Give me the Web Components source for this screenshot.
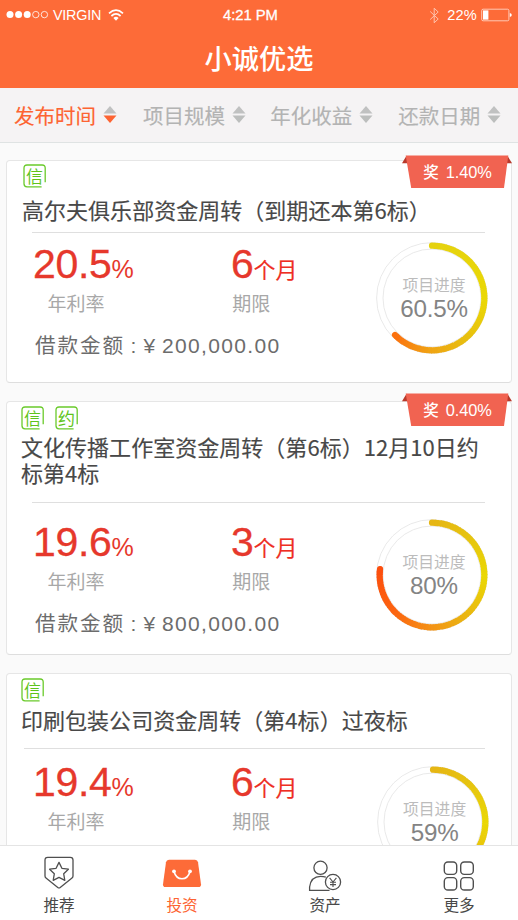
<!DOCTYPE html>
<html lang="zh-CN">
<head>
<meta charset="utf-8">
<title>小诚优选</title>
<style>
body{margin:0;width:518px;height:920px;overflow:hidden;background:#fafafa;font-family:"Liberation Sans","Noto Sans CJK SC",sans-serif;color:#4a4a4a}
</style>
</head>
<body>
<invest-app></invest-app>
<script>
const CJK = '"Noto Sans CJK SC",sans-serif';
const define = (name, html, after) => customElements.define(name, class extends HTMLElement {
  connectedCallback() {
    if (this.shadowRoot) return;
    this.attachShadow({mode: 'open'});
    this.shadowRoot.innerHTML = typeof html === 'function' ? html(this) : html;
    if (after) after(this);
  }
});

define('status-bar', `
<style>
:host{display:grid;grid-template-columns:217px auto 1fr;align-items:center;height:30px;color:#fff;font-size:14.6px;line-height:30px;padding:0 6px;box-sizing:border-box}
div{display:flex;align-items:center;height:30px}
.r{justify-content:flex-end}
svg{display:block;flex:none}
</style>
<div><svg width="43" height="10" viewBox="0 0 43 10"><g fill="#fff"><circle cx="4" cy="4.6" r="3.5"/><circle cx="12.6" cy="4.6" r="3.5"/><circle cx="21.2" cy="4.6" r="3.5"/></g><g fill="none" stroke="#fff" stroke-width=".8"><circle cx="29.8" cy="4.6" r="3.2"/><circle cx="38.4" cy="4.6" r="3.2"/></g></svg><span style="margin-left:4px;font-size:14.4px;letter-spacing:-.25px">VIRGIN</span>
<svg style="margin-left:7px" width="16" height="12" viewBox="0 0 16 12"><g fill="none" stroke="#fff" stroke-width="1.7"><path d="M1 4.4Q8-2 15 4.4"/><path d="M3.4 7Q8 2.8 12.6 7"/></g><path fill="#fff" d="M5.4 8.9Q8 6.8 10.6 8.9L8 11.7Z"/></svg></div>
<div style="font-size:14.8px;letter-spacing:-.05px;-webkit-text-stroke:.3px #fff">4:21 PM</div>
<div class="r"><svg width="11" height="17" viewBox="0 0 11 17"><path d="M1.2 4.5L9.2 12 5.2 15.8V1.2L9.2 5 1.2 12.5" fill="none" stroke="#ffc3ad" stroke-width="1"/></svg><span style="margin:0 4px 0 7px;letter-spacing:.2px">22%</span>
<svg style="margin-right:-1px" width="32" height="14" viewBox="0 0 32 14"><rect x=".7" y="1.2" width="27.2" height="11.6" rx="1.4" fill="none" stroke="#ffe0d3" stroke-width=".8"/><rect x="2" y="2.4" width="5.4" height="9.2" fill="#fff"/><path d="M28.8 5v4q2-.5 2-2t-2-2" fill="#fff"/></svg></div>`);

define('app-header', `
<style>
:host{display:block;height:88px;background:#fd6b38}
h1{margin:0;height:58px;color:#fff;font:500 27.2px/54px ${CJK};text-align:center}
</style><status-bar></status-bar><h1><slot></slot></h1>`);

define('sort-item', `
<style>
:host{display:flex;align-items:center;gap:7px;color:#b3b3b3;font:400 20.5px/54px ${CJK};-webkit-text-stroke:.15px currentColor;--down:#bcbebd}
:host([active]){color:#fd6432;--down:#fd6432}
svg{display:block}
</style><slot></slot><svg width="14" height="18" viewBox="0 0 14 18"><path d="M7 0L13.5 7.6H.5Z" fill="#c0c1c1"/><path d="M7 17L13.5 9.4H.5Z" style="fill:var(--down)"/></svg>`);

define('sort-bar', `
<style>
:host{display:grid;grid-template-columns:129px 127.3px 128px auto;height:55px;box-sizing:border-box;background:#f5f3f4;border-bottom:1px solid #dfe3e3;padding-left:14px}
</style><slot></slot>`);

define('credit-badge', `
<style>
:host{display:grid;width:23px;height:24px;color:#5fc41c;font:400 17px/23px ${CJK};text-align:center}
svg,span{grid-area:1/1}
</style><svg width="23" height="24" viewBox="0 0 23 24"><path d="M22.2 18.3V4Q22.2 1 19.2 1H4Q1 1 1 4V19.8Q1 22.8 4 22.8H18.6" fill="none" stroke="#6aca2b" stroke-width="1.3"/></svg><span><slot></slot></span>`);

define('bonus-ribbon', `
<style>
:host{display:grid;width:110px;height:34px}
svg,div{grid-area:1/1}
div{display:flex;align-items:baseline;justify-content:center;gap:7px;color:#fff;font-size:16.4px;line-height:32px;padding-left:1px;height:32px;letter-spacing:-.1px}
b{font:500 15.5px/32px ${CJK}}
</style>
<svg width="110" height="34" viewBox="0 0 110 34"><path d="M4.5 .8L0 8.3H8Z M105.5 .8L110 8.3H102Z" fill="#b8392b"/><path d="M3.7 .5H106.3L102 33H9.2Z" fill="#f16351"/></svg><div><b>奖</b><slot></slot></div>`);

const STOPS = {
  a: [[0,[229,210,16]],[.25,[234,216,4]],[.4,[232,188,16]],[.5,[240,164,20]],[.625,[252,110,14]],[1,[252,80,10]]],
  b: [[0,[230,182,20]],[.12,[230,196,16]],[.25,[234,216,4]],[.4,[234,178,18]],[.5,[244,146,22]],[.62,[252,100,16]],[.78,[252,76,14]],[1,[252,76,14]]]
};
function colorAt(stops, t) {
  let i = 1;
  while (i < stops.length - 1 && stops[i][0] < t) i++;
  const [t0, c0] = stops[i-1], [t1, c1] = stops[i], k = (t - t0) / (t1 - t0);
  return `rgb(${c0.map((v, j) => Math.round(v + (c1[j] - v) * k))})`;
}
function ringArc(end, stops) {
  const r = 52.3, p = t => [(56 + r * Math.sin(t * 2 * Math.PI)).toFixed(2), (56 - r * Math.cos(t * 2 * Math.PI)).toFixed(2)];
  const n = 90; let out = '';
  for (let i = 0; i < n; i++) {
    const a = end * i / n, b = Math.min(end, end * (i + 1.3) / n);
    const cap = i === 0 || i === n - 1 ? 'round' : 'butt';
    out += `<path d="M${p(a)}A${r} ${r} 0 0 1 ${p(b)}" stroke="${colorAt(stops, a)}" stroke-linecap="${cap}"/>`;
  }
  return out;
}
define('progress-ring', el => `
<style>
:host{display:grid;width:112px;height:112px}
svg,div{grid-area:1/1}
div{display:flex;flex-direction:column;align-items:center;padding-top:32px;padding-left:4px}
small{font:400 15.8px/22px ${CJK};color:#bcbcbc}
strong{font-weight:400;font-size:24.2px;line-height:26px;color:#848484;letter-spacing:-.2px}
</style>
<svg width="112" height="112" viewBox="0 0 112 112" fill="none"><circle cx="56" cy="56" r="55.4" stroke="#e6e6e6" stroke-width=".9"/><circle cx="56" cy="56" r="49" stroke="#e6e6e6" stroke-width=".9"/><g stroke-width="6.2">${ringArc(+el.getAttribute('sweep'), STOPS[el.getAttribute('tone')])}</g></svg>
<div><small>项目进度</small><strong>${el.getAttribute('value')}</strong></div>`);

define('loan-card', el => {
  const g = n => el.getAttribute(n);
  return `
<style>
:host{display:block;position:relative;box-sizing:border-box;width:506px;border:1px solid #e6e6e6;border-bottom-color:#dedede;border-radius:4px;background:#fff;flex:none}
bonus-ribbon{position:absolute;right:-1px;top:var(--bonus-top)}
.badges{display:flex;gap:11px;padding:var(--bt) 0 0 var(--bl)}
h2{margin:var(--tt) 0 0 var(--tl);font:400 22px/26px ${CJK};color:#484848;-webkit-text-stroke:.15px #484848;width:468px;letter-spacing:.03px}
hr{margin:var(--ht) 26px 0 var(--hl);border:0;height:1px;background:#dfdfdf}
.body{display:flex;justify-content:space-between;padding-right:var(--rr)}
.data{padding-top:var(--dt);width:340px}
.row{display:grid;grid-template-columns:198px 1fr;padding-left:26px}
.num{display:flex;align-items:baseline;height:40px;line-height:40px;font-size:41px;color:#e6382c;letter-spacing:-.3px;-webkit-text-stroke:.3px #e6382c}
.num i{font-style:normal;font-size:25px;-webkit-text-stroke:0}
.num em{font:400 22px/40px ${CJK};letter-spacing:0;color:#ee2e24;-webkit-text-stroke:.15px #ee2e24}
.cap{margin-top:7px;font:400 19px/24px ${CJK};color:#a8a8a8}
.cap span:first-child{padding-left:14.5px}
.cap span:last-child{padding-left:1.3px}
.sum{display:flex;align-items:baseline;margin:16px 0 0 28px;height:26px;line-height:26px;font-size:21px;color:#6c6c6c;letter-spacing:1.35px}
.sum b{font:400 20.6px/26px ${CJK};letter-spacing:1.9px;width:95.5px}
.sum u{text-decoration:none;width:13px}
.sum s{text-decoration:none;width:18.5px}
progress-ring{margin-top:var(--rt)}
</style>
${g('bonus') ? `<bonus-ribbon>${g('bonus')}</bonus-ribbon>` : ''}
<div class="badges">${[...g('badges')].map(c => `<credit-badge>${c}</credit-badge>`).join('')}</div>
<h2><slot></slot></h2><hr>
<div class="body"><div class="data">
<div class="row"><div class="num">${g('rate')}<i>%</i></div><div class="num">${g('term')}<em>个月</em></div></div>
<div class="row cap"><span>年利率</span><span>期限</span></div>
${g('amount') ? `<div class="sum"><b>借款金额</b><u>:</u><s>¥</s><span>${g('amount')}</span></div>` : ''}
</div><progress-ring sweep="${g('sweep')}" tone="${g('tone')}" value="${g('progress')}"></progress-ring></div>`;
});

const ICONS = {
  shield: '<svg width="32" height="34" viewBox="0 0 32 34" fill="none" stroke="#4f4f4f" stroke-width="1.3" stroke-linejoin="round"><path d="M4.7 1.3H27.3Q30 1.3 30 4V20.1Q30 21.3 29 22.1L17.2 31.5Q16 32.4 14.8 31.5L3 22.1Q2 21.3 2 20.1V4Q2 1.3 4.7 1.3Z"/><path d="M16 6.4L18.9 12.3 25.4 13.2 20.7 17.8 21.8 24.3 16 21.3 10.2 24.3 11.3 17.8 6.6 13.2 13.1 12.3Z"/></svg>',
  bag: '<svg width="38" height="34" viewBox="0 0 38 34"><path d="M6 3.7H32Q34.6 3.7 35 6.2L38 28.2Q38.2 31 35.6 31H2.4Q-.2 31 0 28.2L3 6.2Q3.4 3.7 6 3.7Z" fill="#fd6b38"/><g fill="#fff"><circle cx="11" cy="15.3" r="1.9"/><circle cx="27" cy="15.3" r="1.9"/></g><path d="M11 15.5Q13 22.8 19 22.8T27 15.5" fill="none" stroke="#fff" stroke-width="1.6"/></svg>',
  person: '<svg width="34" height="34" viewBox="0 0 34 34" fill="none" stroke="#4f4f4f" stroke-width="1.3"><circle cx="12.5" cy="11.8" r="6.6"/><path d="M17.8 21.2Q15.5 20.4 12.5 20.4Q3 20.4 1.6 31V34.3H21.5"/><circle cx="25" cy="26" r="7.6"/><path d="M21.6 21.8L25 26 28.4 21.8M25 26V31M22 26.2H28M22 28.6H28" stroke-width="1.1"/></svg>',
  grid: '<svg width="32" height="34" viewBox="0 0 32 34" fill="none" stroke="#4f4f4f" stroke-width="1.4"><rect x="1.3" y="6" width="12.4" height="12.4" rx="3.6"/><rect x="17.7" y="6" width="12.6" height="12.4" rx="3.6"/><rect x="1.3" y="21.6" width="12.4" height="12.4" rx="3.6"/><rect x="17.7" y="21.6" width="12.6" height="12.4" rx="3.6"/></svg>'
};
define('tab-item', el => `
<style>
:host{display:flex;flex-direction:column;align-items:center;padding-top:10px;color:#484848;font:400 15.6px/24px ${CJK}}
:host([active]){color:#fd6432}
svg{display:block;overflow:visible;margin-bottom:1.5px}
</style>${ICONS[el.getAttribute('icon')]}<slot></slot>`);

define('tab-bar', `
<style>
:host{display:grid;grid-template-columns:118px 128px 158px 110px;height:75px;box-sizing:border-box;background:#fff;border-top:1px solid #e4e4e4;position:relative}
</style><slot></slot>`);

define('invest-app', `
<style>
:host{display:flex;flex-direction:column;width:518px;height:920px;overflow:hidden}
main{flex:1;min-height:0;overflow:hidden;display:flex;flex-direction:column;gap:18px;padding:17px 6px 0;background:#fafafa}
.c1{height:223px;--bonus-top:-6px;--bt:3px;--bl:16px;--tt:8px;--tl:15px;--ht:10px;--hl:25px;--dt:10.5px;--rt:9px;--rr:23px}
.c2{height:254px;--bonus-top:-9px;--bt:4px;--bl:14px;--tt:3px;--tl:14px;--ht:17px;--hl:25px;--dt:19px;--rt:16.4px;--rr:23px}
.c3{height:254px;--bt:4px;--bl:14px;--tt:3.5px;--tl:14px;--ht:16.5px;--hl:17px;--dt:12.5px;--rt:17px;--rr:22.4px}
</style>
<app-header>小诚优选</app-header>
<sort-bar><sort-item active>发布时间</sort-item><sort-item>项目规模</sort-item><sort-item>年化收益</sort-item><sort-item>还款日期</sort-item></sort-bar>
<main>
<loan-card class="c1" badges="信" bonus="1.40%" rate="20.5" term="6" amount="200,000.00" progress="60.5%" sweep=".625" tone="a">高尔夫俱乐部资金周转（到期还本第6标）</loan-card>
<loan-card class="c2" badges="信约" bonus="0.40%" rate="19.6" term="3" amount="800,000.00" progress="80%" sweep=".768" tone="b">文化传播工作室资金周转（第6标）12月10日约标第4标</loan-card>
<loan-card class="c3" badges="信" rate="19.4" term="6" progress="59%" sweep=".6" tone="b">印刷包装公司资金周转（第4标）过夜标</loan-card>
</main>
<tab-bar><tab-item icon="shield">推荐</tab-item><tab-item icon="bag" active>投资</tab-item><tab-item icon="person">资产</tab-item><tab-item icon="grid">更多</tab-item></tab-bar>`);
</script>
</body>
</html>
